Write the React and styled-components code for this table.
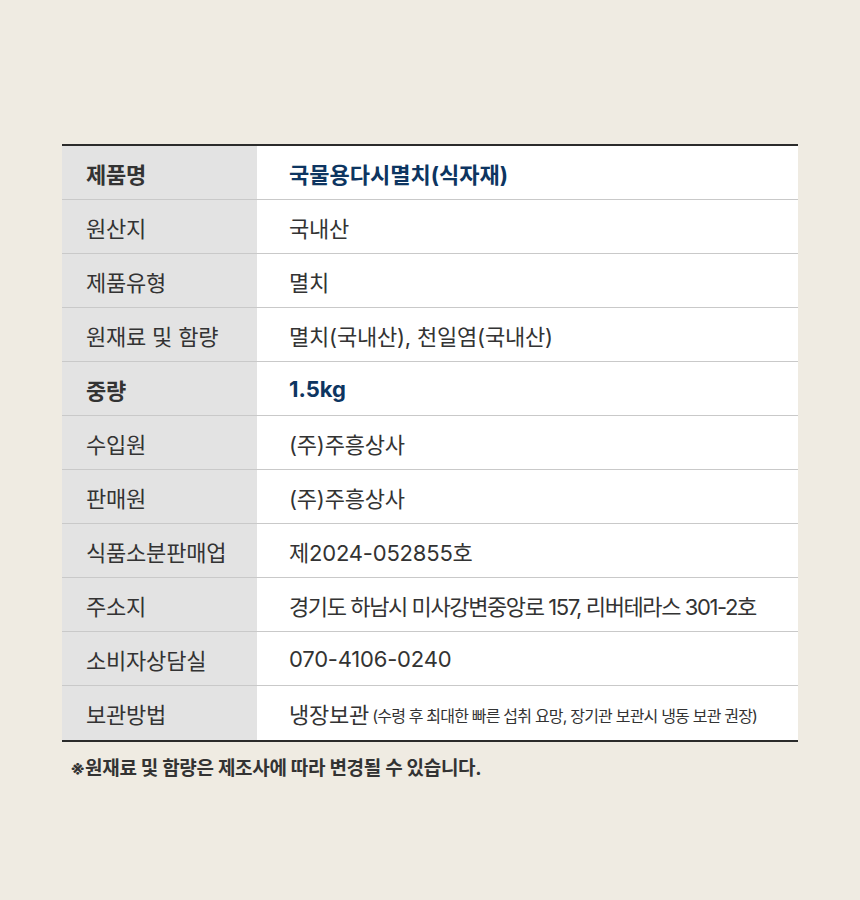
import React from 'react';
import styled, { createGlobalStyle } from 'styled-components';

const rows = [
  { label: '제품명', value: '국물용다시멸치(식자재)', strong: true },
  { label: '원산지', value: '국내산' },
  { label: '제품유형', value: '멸치' },
  { label: '원재료 및 함량', value: '멸치(국내산), 천일염(국내산)' },
  { label: '중량', value: '1.5kg', strong: true },
  { label: '수입원', value: '(주)주흥상사' },
  { label: '판매원', value: '(주)주흥상사' },
  { label: '식품소분판매업', value: '제2024-052855호' },
  { label: '주소지', value: '경기도 하남시 미사강변중앙로 157, 리버테라스 301-2호', tight: true },
  { label: '소비자상담실', value: '070-4106-0240' },
  {
    label: '보관방법',
    value: '냉장보관',
    small: '(수령 후 최대한 빠른 섭취 요망, 장기관 보관시 냉동 보관 권장)',
  },
];

function App() {
  return (
    <>
      <GlobalStyle />
      <Page>
        <Table>
          {rows.map((row, i) => (
            <Row key={row.label} $last={i === rows.length - 1}>
              <Label $strong={row.strong}>{row.label}</Label>
              <Value $strong={row.strong} $tight={row.tight}>
                {row.value}
                {row.small && <Small>{row.small}</Small>}
              </Value>
            </Row>
          ))}
        </Table>
        <Note>※원재료 및 함량은 제조사에 따라 변경될 수 있습니다.</Note>
      </Page>
    </>
  );
}

const GlobalStyle = createGlobalStyle`
  body {
    margin: 0;
    background: #efebe2;
    font-family: Inter, 'Noto Sans CJK KR', sans-serif;
  }
`;

const Page = styled.div`
  width: 860px;
  height: 900px;
  padding: 144px 62px 0;
  box-sizing: border-box;
`;

const Table = styled.div`
  display: flex;
  flex-direction: column;
  border-top: 2px solid #2b2b2b;
  border-bottom: 2px solid #2b2b2b;
`;

const Row = styled.div`
  display: grid;
  grid-template-columns: 195px 1fr;
  height: 54px;
  box-sizing: border-box;
  border-bottom: ${(p) => (p.$last ? 'none' : '1px solid #c9c9c9')};
`;

const Label = styled.div`
  display: flex;
  align-items: center;
  padding-left: 24px;
  background: #e3e3e3;
  color: #333;
  font-size: 22px;
  font-weight: ${(p) => (p.$strong ? 700 : 400)};
  letter-spacing: -0.2px;
`;

const Value = styled.div`
  display: flex;
  align-items: center;
  padding-left: 32px;
  background: #fff;
  color: ${(p) => (p.$strong ? '#0d3561' : '#333')};
  font-size: 22px;
  font-weight: ${(p) => (p.$strong ? 700 : 400)};
  letter-spacing: ${(p) => (p.$tight ? '-1.4px' : p.$strong ? '0' : '-0.2px')};
  white-space: nowrap;
`;

const Small = styled.span`
  margin-left: 3px;
  font-size: 16px;
  letter-spacing: -0.8px;
  padding-top: 3px;
`;

const Note = styled.p`
  margin: 11px 0 0 8px;
  color: #333;
  font-size: 19px;
  font-weight: 700;
  letter-spacing: -0.3px;
`;

export default App;
